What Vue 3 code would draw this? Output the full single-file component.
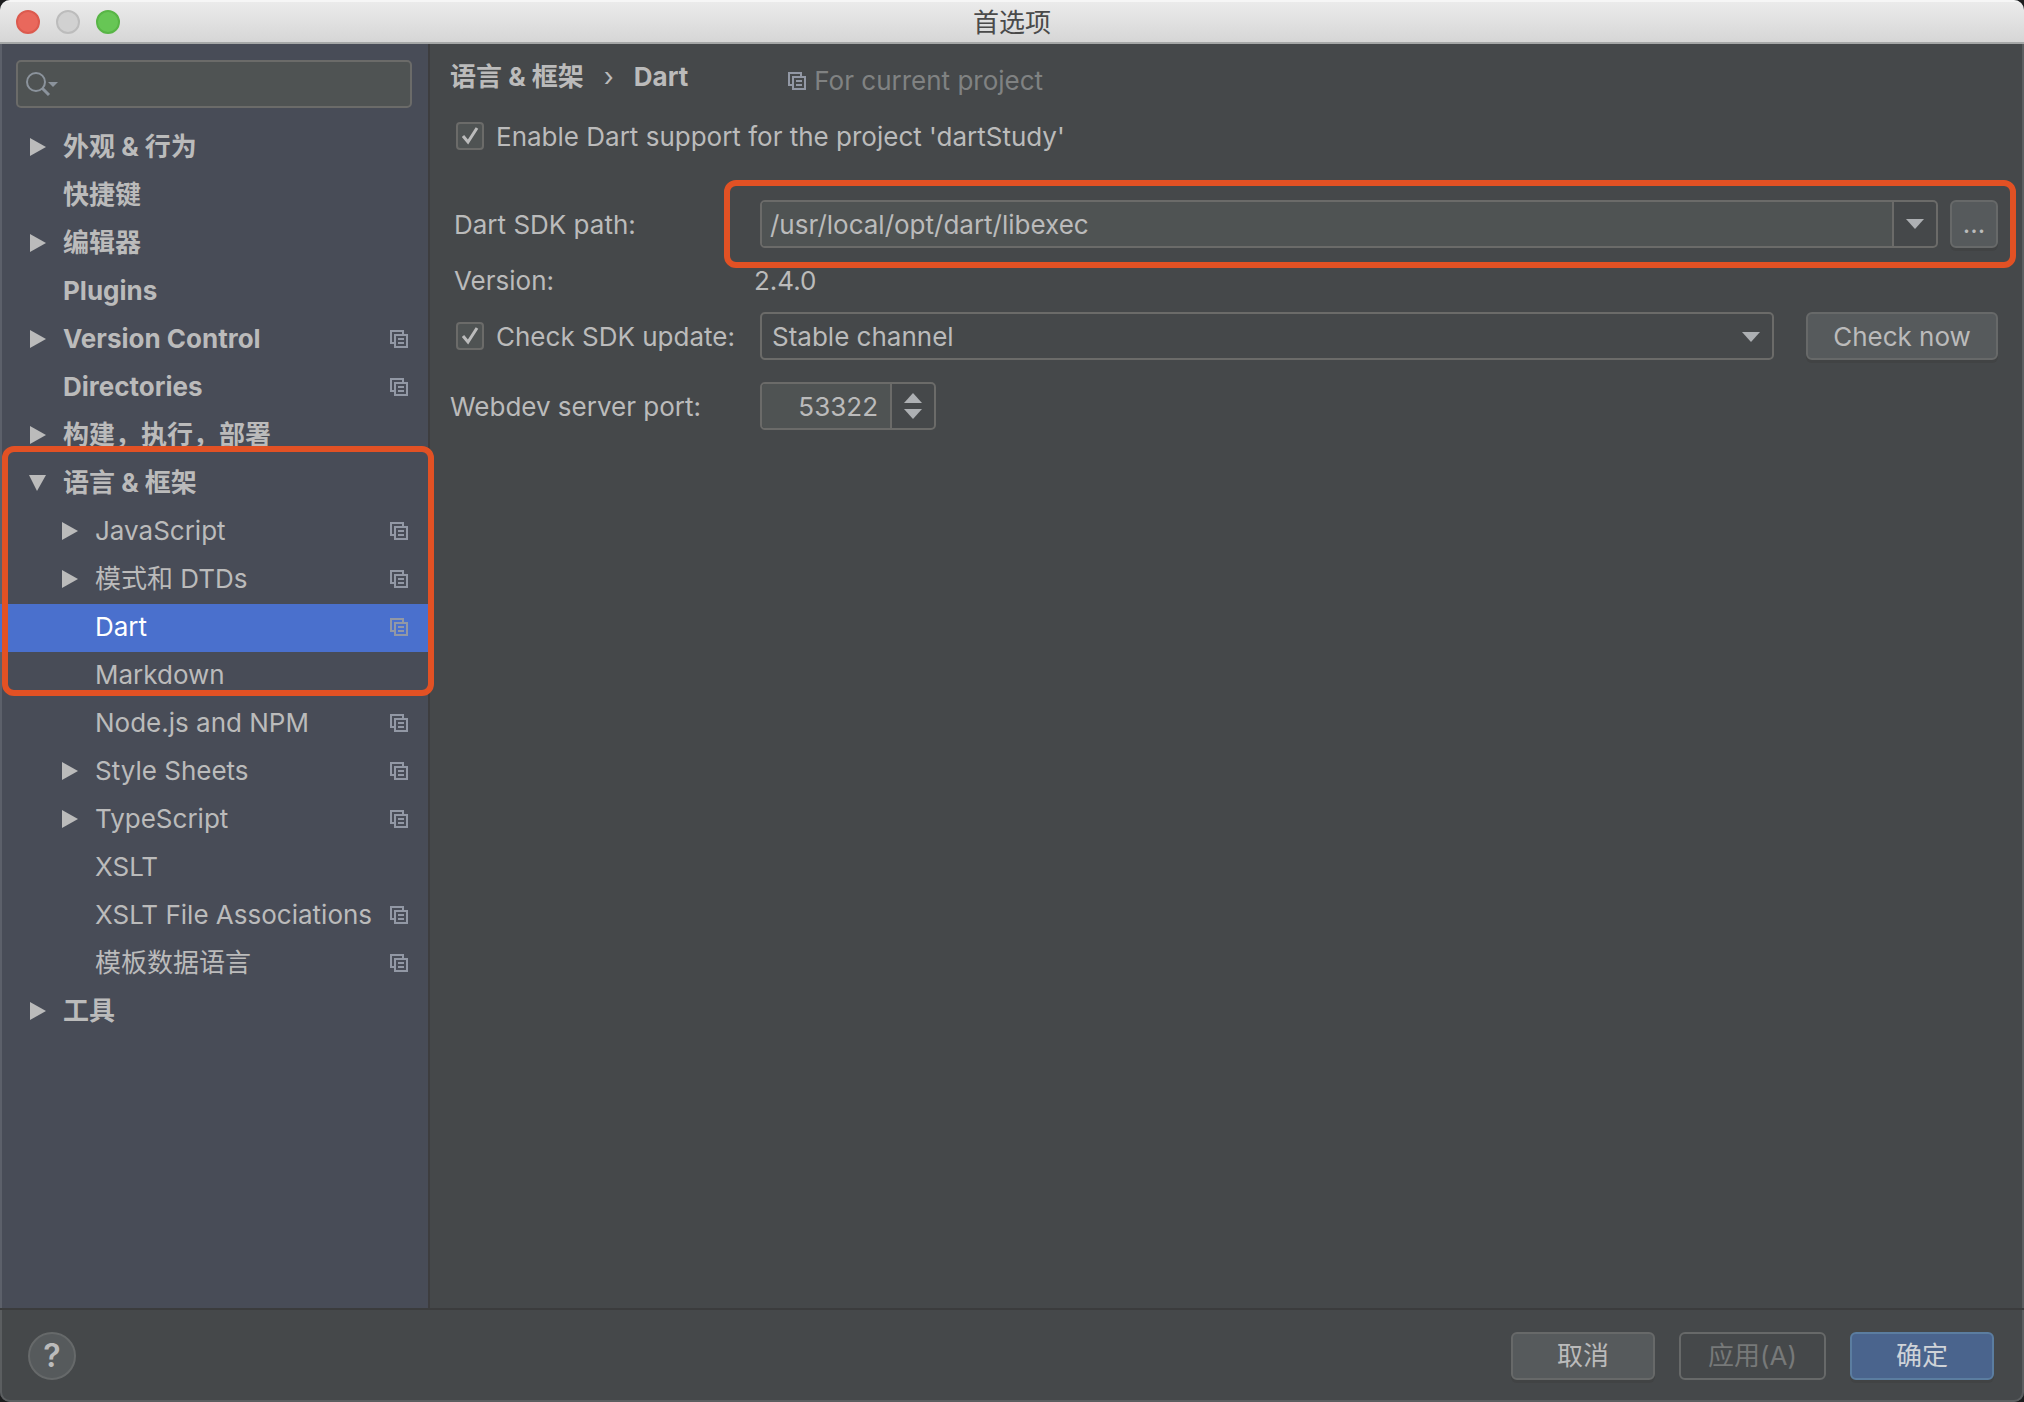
<script setup>
import { ref } from 'vue'

const tree = [
  { label: '外观 & 行为', level: 0, arrow: 'right' },
  { label: '快捷键', level: 0 },
  { label: '编辑器', level: 0, arrow: 'right' },
  { label: 'Plugins', level: 0 },
  { label: 'Version Control', level: 0, arrow: 'right', project: true },
  { label: 'Directories', level: 0, project: true },
  { label: '构建，执行，部署', level: 0, arrow: 'right' },
  { label: '语言 & 框架', level: 0, arrow: 'down' },
  { label: 'JavaScript', level: 1, arrow: 'right', project: true },
  { label: '模式和 DTDs', level: 1, arrow: 'right', project: true },
  { label: 'Dart', level: 1, project: true },
  { label: 'Markdown', level: 1 },
  { label: 'Node.js and NPM', level: 1, project: true },
  { label: 'Style Sheets', level: 1, arrow: 'right', project: true },
  { label: 'TypeScript', level: 1, arrow: 'right', project: true },
  { label: 'XSLT', level: 1 },
  { label: 'XSLT File Associations', level: 1, project: true },
  { label: '模板数据语言', level: 1, project: true },
  { label: '工具', level: 0, arrow: 'right' },
]

const selected = ref('Dart')
const query = ref('')
const enabled = ref(true)
const checkUpdate = ref(true)
const sdkPath = ref('/usr/local/opt/dart/libexec')
const channel = ref('stable')
const port = ref('53322')

function step(delta) {
  port.value = String(Number(port.value) + delta)
}
</script>

<template>
  <div class="window">
    <header class="titlebar">
      <div class="lights">
        <button class="light close" aria-label="Close"></button>
        <button class="light minimize" aria-label="Minimize" disabled></button>
        <button class="light zoom" aria-label="Zoom"></button>
      </div>
      <h1 class="title">首选项</h1>
    </header>

    <div class="body">
      <aside class="sidebar">
        <div class="search">
          <svg class="search-icon" width="34" height="26" viewBox="0 0 34 26" aria-hidden="true">
            <circle cx="10" cy="11" r="9" fill="none" stroke="#8b939c" stroke-width="2" />
            <path d="M16 17L23 24" stroke="#8b939c" stroke-width="3" />
            <path d="M22 11H32L27 16Z" fill="#8b939c" />
          </svg>
          <input v-model="query" type="text" aria-label="Search settings" />
        </div>
        <nav class="tree-wrap">
          <ul class="tree">
            <li v-for="item in tree" :key="item.label">
              <button
                class="row"
                :class="{ child: item.level === 1, selected: selected === item.label }"
                @click="selected = item.label"
              >
                <span class="arrow">
                  <svg v-if="item.arrow === 'right'" width="18" height="18" viewBox="0 0 18 18"><path d="M1 0L17 9L1 18Z" fill="currentColor" /></svg>
                  <svg v-else-if="item.arrow === 'down'" width="18" height="18" viewBox="0 0 18 18"><path d="M0 1H17L8 17Z" fill="currentColor" /></svg>
                </span>
                <span class="label">{{ item.label }}</span>
                <svg v-if="item.project" class="copy" width="18" height="18" viewBox="0 0 18 18">
                  <path d="M4 13H1V1H13V4" fill="none" stroke="currentColor" stroke-width="2" />
                  <rect x="5" y="5" width="12" height="12" fill="none" stroke="currentColor" stroke-width="2" />
                  <path d="M8 9H14M8 13H14" stroke="currentColor" stroke-width="2" />
                </svg>
              </button>
            </li>
          </ul>
          <div class="mark tree-mark"></div>
        </nav>
      </aside>

      <main class="main">
        <div class="crumbs">
          <h2 class="crumb">语言 &amp; 框架</h2>
          <span class="sep">›</span>
          <h2 class="crumb">Dart</h2>
          <span class="scope">
            <svg class="copy" width="18" height="18" viewBox="0 0 18 18" aria-hidden="true">
              <path d="M4 13H1V1H13V4" fill="none" stroke="currentColor" stroke-width="2" />
              <rect x="5" y="5" width="12" height="12" fill="none" stroke="currentColor" stroke-width="2" />
              <path d="M8 9H14M8 13H14" stroke="currentColor" stroke-width="2" />
            </svg>
            For current project
          </span>
        </div>

        <label class="check enable">
          <input v-model="enabled" type="checkbox" />
          <span>Enable Dart support for the project 'dartStudy'</span>
        </label>

        <div class="field path">
          <label class="name" for="sdk">Dart SDK path:</label>
          <div class="control">
            <div class="combo">
              <input id="sdk" v-model="sdkPath" type="text" />
              <button class="drop" aria-label="Show paths">
                <svg width="18" height="10" viewBox="0 0 18 10"><path d="M0 0H18L9 10Z" fill="#adb0b3" /></svg>
              </button>
            </div>
            <button class="btn browse">...</button>
            <div class="mark path-mark"></div>
          </div>
        </div>

        <div class="field version">
          <span class="name">Version:</span>
          <output class="value">2.4.0</output>
        </div>

        <div class="field update">
          <div class="name">
            <label class="check">
              <input v-model="checkUpdate" type="checkbox" />
              <span>Check SDK update:</span>
            </label>
          </div>
          <div class="control wide">
            <div class="select">
              <select v-model="channel" aria-label="Channel">
                <option value="stable">Stable channel</option>
                <option value="dev">Dev channel</option>
              </select>
              <svg class="caret" width="18" height="10" viewBox="0 0 18 10"><path d="M0 0H18L9 10Z" fill="#adb0b3" /></svg>
            </div>
            <button class="btn now">Check now</button>
          </div>
        </div>

        <div class="field port">
          <label class="name" for="port">Webdev server port:</label>
          <div class="spinner">
            <input id="port" v-model="port" type="text" inputmode="numeric" />
            <div class="steps">
              <button aria-label="Increase" @click="step(1)">
                <svg width="18" height="10" viewBox="0 0 18 10"><path d="M0 10H18L9 0Z" fill="#adb0b3" /></svg>
              </button>
              <button aria-label="Decrease" @click="step(-1)">
                <svg width="18" height="10" viewBox="0 0 18 10"><path d="M0 0H18L9 10Z" fill="#adb0b3" /></svg>
              </button>
            </div>
          </div>
        </div>
      </main>
    </div>

    <footer class="footer">
      <button class="help" aria-label="Help">?</button>
      <div class="actions">
        <button class="btn">取消</button>
        <button class="btn" disabled>应用(A)</button>
        <button class="btn primary">确定</button>
      </div>
    </footer>
  </div>
</template>

<style>
body {
  background: #1c1d1e;
}
</style>

<style scoped>
.window,
.window * {
  box-sizing: border-box;
}
.window {
  display: flex;
  flex-direction: column;
  min-height: 100vh;
  overflow: hidden;
  border-radius: 10px;
  background: #45484a;
  color: #bbbbbb;
  font: 26px/32px Inter, "Noto Sans CJK SC", sans-serif;
  box-shadow: inset 0 0 0 2px #5b5e60;
}
button,
input,
select {
  margin: 0;
  padding: 0;
  border: 0;
  background: none;
  color: inherit;
  font: inherit;
  outline: none;
}
svg {
  display: block;
  flex: none;
}

.titlebar {
  display: grid;
  grid-template-columns: 1fr auto 1fr;
  align-items: center;
  height: 44px;
  padding: 0 16px;
  background: linear-gradient(#ebebeb, #d6d6d6);
  border-top: 2px solid #f6f6f6;
  border-bottom: 2px solid #a5a7a7;
}
.lights {
  display: flex;
  gap: 16px;
}
.light {
  width: 24px;
  height: 24px;
  border: 2px solid;
  border-radius: 50%;
}
.close {
  background: #e9685c;
  border-color: #dc5a4e;
}
.minimize {
  background: #d1d1d1;
  border-color: #bcbcbc;
}
.zoom {
  background: #67c655;
  border-color: #58b546;
}
.title {
  margin: 0;
  padding-top: 2px;
  color: #4a4a4a;
  font-size: 26px;
  font-weight: 400;
}

.body {
  display: flex;
  flex: 1;
}
.sidebar {
  flex: none;
  width: 430px;
  padding-top: 16px;
  background: #484c57;
  border-right: 2px solid #3d3d3f;
  box-shadow: inset 2px 0 #5c606a;
}
.search {
  display: flex;
  align-items: center;
  height: 48px;
  margin: 0 16px;
  padding-left: 8px;
  background: #4f5353;
  border: 2px solid #6b6b69;
  border-radius: 5px;
}
.search input {
  flex: 1;
  min-width: 0;
  padding-left: 8px;
}
.tree-wrap {
  position: relative;
  margin-top: 16px;
}
.tree {
  margin: 0;
  padding: 0;
  list-style: none;
}
.row {
  display: flex;
  align-items: center;
  width: 100%;
  height: 48px;
  padding: 0 20px 2px 29px;
  font-weight: 700;
  text-align: left;
  white-space: nowrap;
}
.row.child {
  padding-left: 61px;
  font-weight: 400;
}
.row.selected {
  background: #4a70cd;
  color: #ffffff;
}
.arrow {
  width: 34px;
}
.label {
  flex: 1;
}
.copy {
  color: #9298a5;
}
.mark {
  position: absolute;
  border: 6px solid #e25124;
  border-radius: 12px;
  pointer-events: none;
}
.tree-mark {
  top: 322px;
  left: 2px;
  right: -6px;
  height: 250px;
}

.main {
  flex: 1;
  min-width: 0;
  padding: 16px 26px 16px 24px;
}
.crumbs {
  display: flex;
  align-items: center;
  height: 34px;
  margin-left: -4px;
}
.crumb {
  margin: 0;
  font-size: inherit;
  font-weight: 700;
}
.sep {
  width: 50px;
  text-align: center;
}
.scope {
  display: flex;
  align-items: center;
  gap: 8px;
  margin: 8px 0 0 100px;
  color: #808282;
}
.check {
  display: flex;
  align-items: center;
  gap: 12px;
  white-space: nowrap;
}
.check input {
  appearance: none;
  flex: none;
  width: 28px;
  height: 28px;
  margin-left: 2px;
  background: #4f5353;
  border: 2px solid #6b6b69;
  border-radius: 4px;
}
.check input:checked {
  background: #4f5353 url("data:image/svg+xml,%3Csvg xmlns='http://www.w3.org/2000/svg' viewBox='0 0 24 24'%3E%3Cpath d='M5 12L10 18L19 4' fill='none' stroke='%23bbbbbb' stroke-width='3'/%3E%3C/svg%3E") center / 24px 24px no-repeat;
}
.check span {
  padding-top: 2px;
}
.enable {
  height: 32px;
  margin-top: 26px;
}
.field {
  display: flex;
  align-items: center;
}
.name {
  flex: none;
  width: 306px;
}
label.name,
span.name,
.value {
  padding-top: 2px;
}
.path {
  margin-top: 48px;
}
.control {
  position: relative;
  display: flex;
  flex: 1;
  gap: 12px;
}
.control.wide {
  gap: 32px;
}
.combo,
.select,
.spinner {
  display: flex;
  height: 48px;
  border: 2px solid #6b6b69;
  border-radius: 5px;
  overflow: hidden;
}
.combo,
.select {
  flex: 1;
}
.combo input {
  flex: 1;
  min-width: 0;
  padding: 2px 0 0 8px;
  background: #4f5353;
}
.drop {
  display: flex;
  align-items: center;
  justify-content: center;
  width: 44px;
  border-left: 2px solid #6b6b69;
}
.btn {
  height: 48px;
  background: #565a5c;
  border: 2px solid #676969;
  border-radius: 6px;
  box-shadow: 0 3px #414344;
}
.browse {
  width: 48px;
}
.path-mark {
  inset: -20px -18px -20px -36px;
}
.version {
  height: 32px;
  margin-top: 16px;
}
.value {
  margin-left: -6px;
}
.update {
  margin-top: 16px;
}
.select {
  position: relative;
}
.select select {
  appearance: none;
  width: 100%;
  padding: 2px 0 0 10px;
}
.select option {
  background: #45484a;
}
.caret {
  position: absolute;
  top: 18px;
  right: 12px;
  pointer-events: none;
}
.now {
  width: 192px;
  padding-top: 2px;
}
.port {
  margin: 22px 0 0 -4px;
}
.port .name {
  width: 310px;
}
.spinner {
  width: 176px;
}
.spinner input {
  flex: 1;
  min-width: 0;
  padding: 2px 12px 0 0;
  background: #4f5353;
  text-align: right;
}
.steps {
  display: flex;
  flex-direction: column;
  justify-content: center;
  gap: 6px;
  width: 44px;
  border-left: 2px solid #6b6b69;
}
.steps button {
  display: flex;
  justify-content: center;
}

.footer {
  display: flex;
  align-items: center;
  justify-content: space-between;
  height: 94px;
  padding: 0 30px 0 28px;
  border-top: 2px solid #3b3c3d;
}
.help {
  width: 48px;
  height: 48px;
  background: #565a5c;
  border: 2px solid #66696a;
  border-radius: 50%;
  font-size: 32px;
  font-weight: 600;
}
.actions {
  display: flex;
  gap: 24px;
}
.actions .btn {
  min-width: 144px;
  padding: 0 27px;
}
.btn:disabled {
  background: none;
  box-shadow: none;
  color: #777979;
}
.btn.primary {
  background: #4a648d;
  border-color: #5b7da0;
  color: #cfd3d8;
}
</style>
